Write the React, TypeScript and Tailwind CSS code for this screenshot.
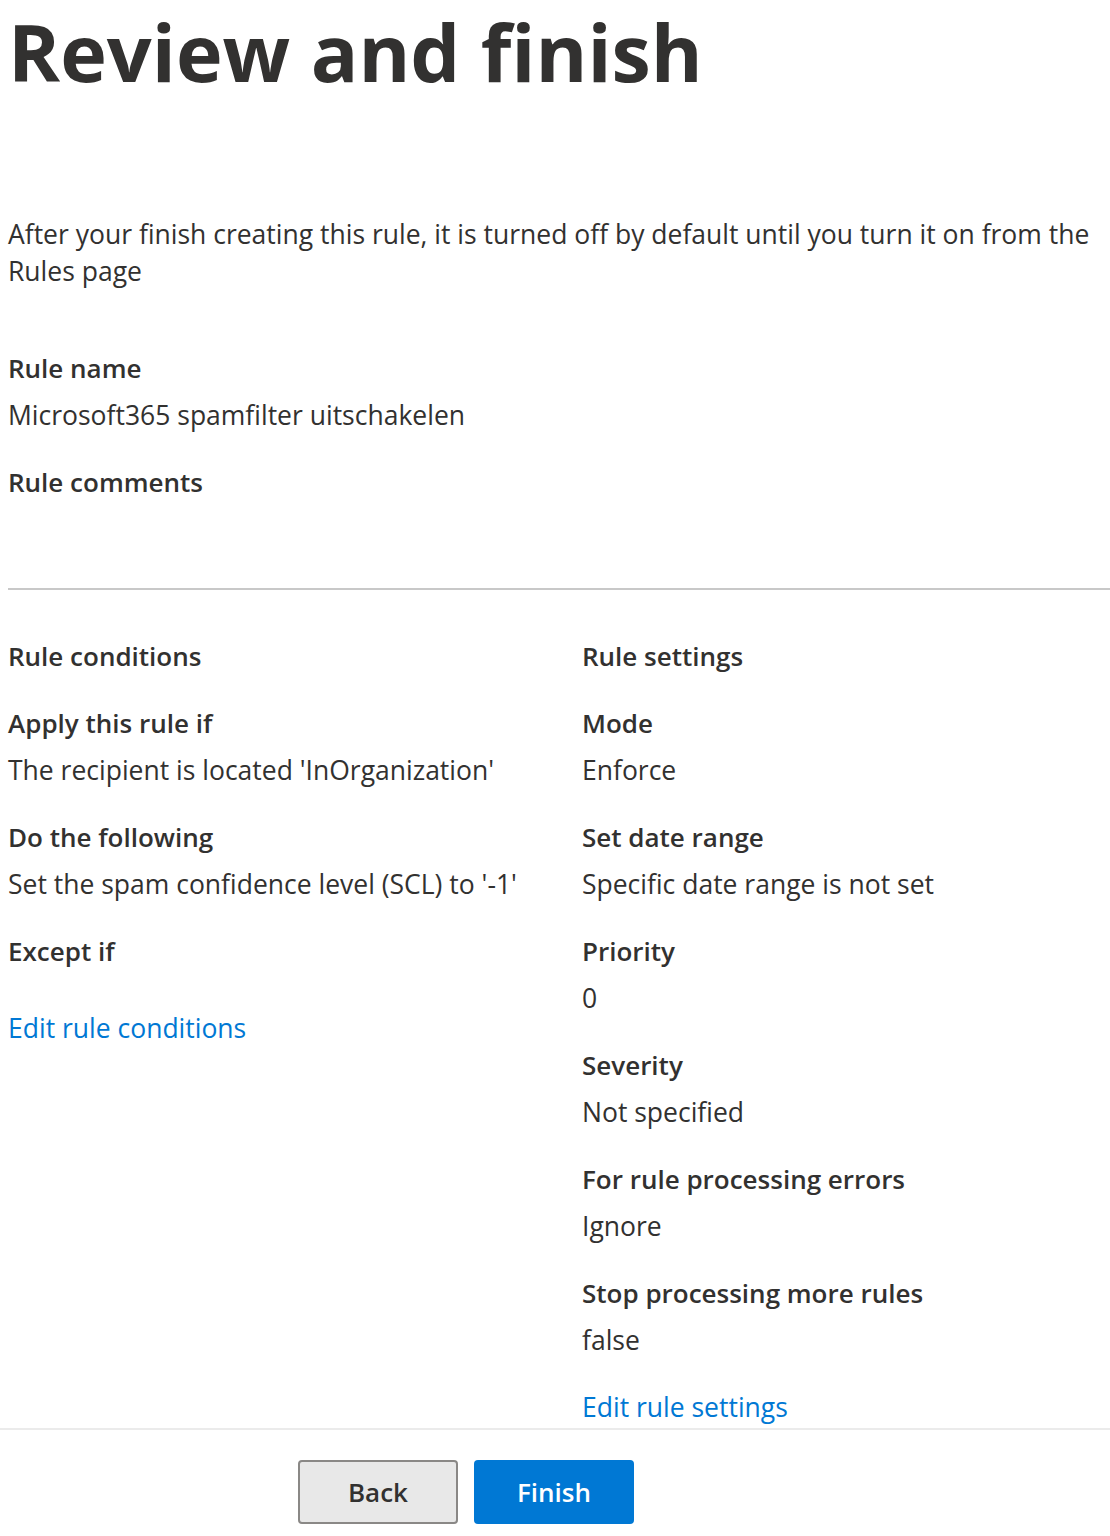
const font = { fontFamily: '"Open Sans", "Noto Sans", sans-serif' }

function Field({ label, value }: { label: string; value?: string }) {
  return (
    <div className="mb-[30px]">
      <div className="text-[26px] font-semibold leading-[37px]">{label}</div>
      {value !== undefined && <div className="mt-[10px] text-[26.5px] leading-[37px]">{value}</div>}
    </div>
  )
}

export default function App() {
  return (
    <div className="min-h-[1536px] bg-white pt-[4px] text-[#323130]" style={font}>
      <div className="pl-2">
        <h1 className="text-[79px] font-bold leading-[96px]">Review and finish</h1>

        <p className="mt-[116px] text-[26.5px] leading-[37px]">
          After your finish creating this rule, it is turned off by default until you turn it on from the Rules page
        </p>

        <div className="mt-[60px]">
          <Field label="Rule name" value="Microsoft365 spamfilter uitschakelen" />
          <Field label="Rule comments" />
        </div>

        <div className="mt-[87px] h-[2px] bg-[#c8c8c8]" />

        <div className="grid grid-cols-[574px_1fr] pt-[48px]">
          <div>
            <h2 className="mb-[30px] text-[26px] font-semibold leading-[37px]">Rule conditions</h2>
            <Field label="Apply this rule if" value="The recipient is located 'InOrganization'" />
            <Field label="Do the following" value="Set the spam confidence level (SCL) to '-1'" />
            <Field label="Except if" />
            <a className="block pt-[10px] text-[26.5px] leading-[37px] text-[#0078d4]">Edit rule conditions</a>
          </div>
          <div>
            <h2 className="mb-[30px] text-[26px] font-semibold leading-[37px]">Rule settings</h2>
            <Field label="Mode" value="Enforce" />
            <Field label="Set date range" value="Specific date range is not set" />
            <Field label="Priority" value="0" />
            <Field label="Severity" value="Not specified" />
            <Field label="For rule processing errors" value="Ignore" />
            <Field label="Stop processing more rules" value="false" />
            <a className="block text-[26.5px] leading-[37px] text-[#0078d4]">Edit rule settings</a>
          </div>
        </div>
      </div>

      <div className="mt-[2px] border-t-2 border-[#ebebeb]">
        <div className="flex gap-4 pl-[298px] pt-[30px]">
          <button className="h-[64px] w-[160px] rounded-[4px] border-2 border-[#8a8886] bg-[#e8e8e8] text-[26px] font-semibold text-[#323130]">
            Back
          </button>
          <button className="h-[64px] w-[160px] rounded-[4px] bg-[#0078d4] text-[26px] font-semibold text-white">
            Finish
          </button>
        </div>
      </div>
    </div>
  )
}
